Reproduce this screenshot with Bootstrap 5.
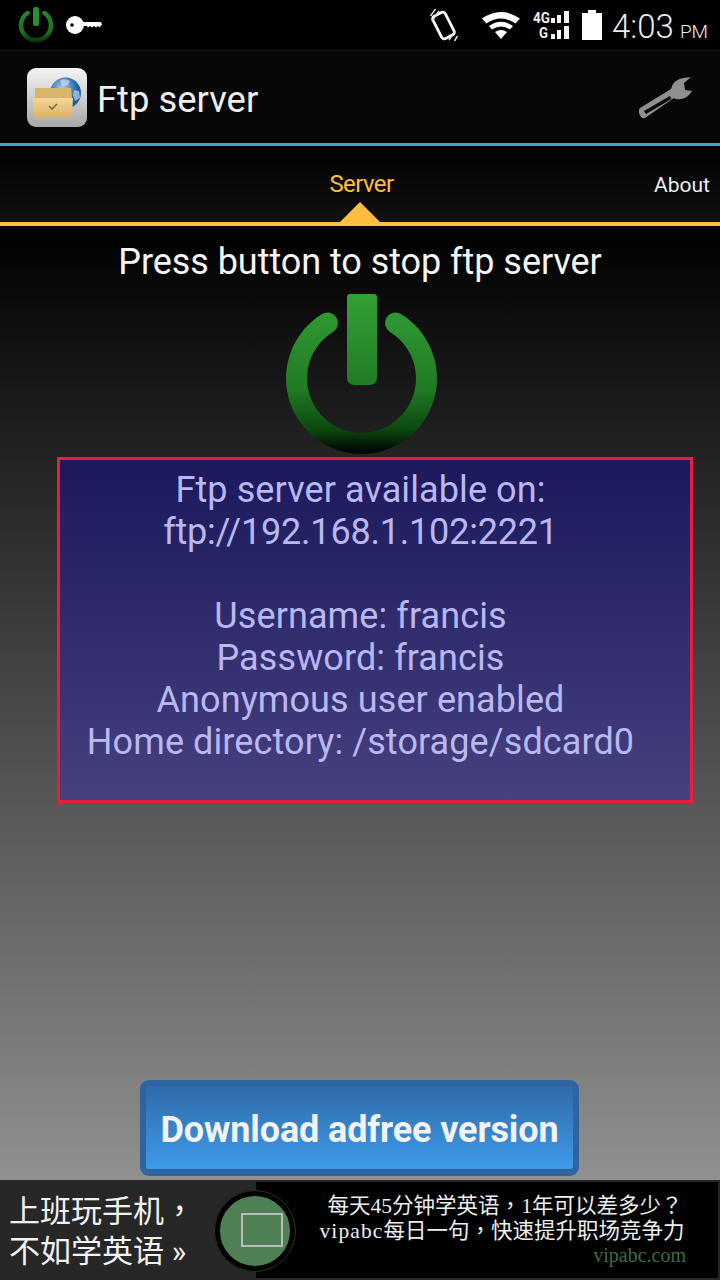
<!doctype html>
<html lang="en"><head><meta charset="utf-8"><title>Ftp server</title>
<link href="https://cdn.jsdelivr.net/npm/bootstrap@5.3.0/dist/css/bootstrap.min.css" rel="stylesheet">
<style>
html,body{margin:0;background:#000}
.phone{width:720px;height:1280px;overflow:hidden;font-family:Roboto,"Noto Sans CJK SC",sans-serif;color:#f2f2f2;background:#000}
.sbar{height:51px;border-bottom:1px solid #161616;background:#000;padding-left:18px;padding-right:12px}
.key{margin-left:12px}
.ic-wifi{margin-left:24px}
.ic-net{margin-left:13px}
.ic-bat{margin-left:12px}
.clock{font-size:33px;line-height:42px;color:#eee;font-weight:300;margin:8px 0 0 10px;width:96px;white-space:nowrap}
.clock small{font-size:19px;font-weight:300;margin-left:-2px}
.abar{height:92px;background:#070707;padding-left:27px;padding-right:27px}
.appic{margin-top:2px}
.atitle{font-size:36.4px;line-height:42px;margin-left:10px;color:#eee;margin-top:6px}
.rule-blue{height:3px;background:#33a9d6}
.tabs{height:76px;background:linear-gradient(#000,#111)}
.tab-on{color:#ffbe41;font-size:24px;line-height:28px;letter-spacing:-.6px;padding:24px 0 0 3px;width:100%;text-align:center}
.tab-off{font-size:21px;line-height:28px;color:#eee;right:10px;top:25px}
.tri{left:340px;bottom:0;border-left:20px solid transparent;border-right:20px solid transparent;border-bottom:20px solid #ffbe41}
.rule-y{height:4px;background:#ffbe41}
.body-area{height:954px;background:linear-gradient(#000,#909090)}
.hint{font-size:36px;line-height:42px;padding-top:15px;color:#f5f5f5;letter-spacing:-.05px}
.power{width:160px;height:164px;margin-top:10px;display:block}
.infobox{width:636px;height:346px;margin:0 0 0 57px;border:3px solid #ee1c3a;background:linear-gradient(#1b195c,#46417f);color:#b9b8f2;font-size:36px;line-height:42px;padding:9px 29px 0 0;letter-spacing:.1px}
.infobox .addr{letter-spacing:-.2px}
.spacer-y{height:277px}
.dlbtn{width:439px;height:96px;margin-left:140px;border:0;border-radius:9px;padding:6px 6px 7px;background:#2f659f;display:block}
.dlin{display:block;height:83px;background:linear-gradient(#2f6ba8,#3f9bea);border-radius:3px;color:#f2f2f2;font-size:36px;font-weight:700;line-height:89px;letter-spacing:-.13px}
.adbar{height:100px;background:#272727}
.adl{width:256px;font-size:31px;padding:7px 0 0 9px;white-space:nowrap}
.adl .ln{display:block;height:43px;line-height:43px}
.adr{left:256px;top:2px;width:462px;height:96px;background:#000;color:#eee;font-family:"Liberation Serif","Noto Sans CJK SC",serif;font-size:21.5px;text-align:center;padding:9px 0 0 36px}
.adr .ln{display:block;height:25px;line-height:25px;white-space:nowrap}
.adr .ln2{padding-right:6px}
.adr .lat{letter-spacing:1.1px}
.punct{font-family:"Noto Sans CJK TC",sans-serif}
.adurl{color:#3f6b41;font-size:20px;line-height:24px;text-align:right;padding:2px 32px 0 0}
.adcirc{left:214px;top:10px;width:82px;height:82px;border-radius:50%;background:#4f8054;border:6px solid #000;outline:1px solid #1d3a1f;outline-offset:-1px;z-index:2}
.adsq{width:42px;height:34px;border:2px solid #bbb;margin:0 0 2px 14px}
</style></head>
<body>
<div class="phone">
 <div class="sbar d-flex align-items-center">
  <svg width="36" height="36" viewBox="0 0 36 36" aria-hidden="true"><defs><linearGradient id="pg1" gradientUnits="userSpaceOnUse" x1="0" y1="0" x2="0" y2="36"><stop offset="0" stop-color="#2a8f2e"/><stop offset=".7" stop-color="#1a701e"/><stop offset="1" stop-color="#032a06"/></linearGradient></defs><path d="M9.500 6A15 15 0 1 0 26.500 6" fill="none" stroke="url(#pg1)" stroke-width="4.500" stroke-linecap="round"/><rect x="15" y="0" width="6" height="19" rx="2.500" fill="#2a8f2e"/></svg>
  <svg class="key" width="36" height="18" viewBox="0 0 36 18" aria-hidden="true"><circle cx="9" cy="9" r="9" fill="#fff"/><circle cx="6" cy="9" r="1.800" fill="#000"/><path d="M15 6h20l1 2.500-2.500 3-1.500-1.500-2 1.500-2-1.500-2 1.500-2-1.500-2 1.500-1-1.500H15z" fill="#fff"/></svg>
  <div class="ms-auto d-flex align-items-center">
   <svg width="28" height="34" viewBox="0 0 28 34" aria-hidden="true"><rect x="6.500" y="5" width="14" height="25" rx="3" transform="rotate(-27 13.500 17.500)" fill="none" stroke="#fff" stroke-width="2.800"/><path d="M.5 8L5.500 1M2 13L9 3M19 32l6-9M24.500 33l3-5" stroke="#ddd" stroke-width="1.500" fill="none"/></svg>
   <svg class="ic-wifi" width="38" height="27" viewBox="0 0 38 27" aria-hidden="true"><path d="M19 27l-6-7q6-4 12 0zM10 17.500l-3-3.500q12-8.500 24 0l-3 3.500q-9-6-18 0zM4.500 11.500L0 6.500q19-13 38 0l-4.500 5q-14.500-10-29 0z" fill="#fff"/></svg>
   <svg class="ic-net" width="37" height="30" viewBox="0 0 37 30" aria-hidden="true"><text x="0" y="13" font-family="Roboto" font-size="14" font-weight="700" fill="#eee" textLength="17" lengthAdjust="spacingAndGlyphs">4G</text><text x="6" y="28" font-family="Roboto" font-size="14" font-weight="700" fill="#eee" textLength="9" lengthAdjust="spacingAndGlyphs">G</text><path d="M18 8h4v5h-4zM24 5h4v8h-4zM31 1h5v12h-5zM18 24h4v5h-4zM24 20h4v9h-4zM31 16h5v13h-5z" fill="#fff"/></svg>
   <svg class="ic-bat" width="20" height="30" viewBox="0 0 20 30" aria-hidden="true"><path d="M0 3h6V0h8v3h6v27H0z" fill="#fff"/></svg>
   <div class="clock">4:03 <small>PM</small></div>
  </div>
 </div>
 <div class="abar d-flex align-items-center">
  <svg class="appic" width="60" height="60" viewBox="0 0 60 60" aria-hidden="true"><defs><linearGradient id="ic" x1="0" y1="0" x2="0" y2="1"><stop offset="0" stop-color="#f4f4f4"/><stop offset="1" stop-color="#a8a8a8"/></linearGradient><linearGradient id="fo" x1="0" y1="0" x2="0" y2="1"><stop offset="0" stop-color="#f3d79a"/><stop offset="1" stop-color="#dcb266"/></linearGradient><radialGradient id="gl" cx=".4" cy=".35"><stop offset="0" stop-color="#a8d0f0"/><stop offset="1" stop-color="#1d5fa8"/></radialGradient></defs><rect width="60" height="59" rx="9" fill="url(#ic)"/><circle cx="38.500" cy="25" r="15.500" fill="url(#gl)"/><path d="M33 12q6-2 10 1l-2 4-6 1zM47 22l5 1 1 7-5 3-2-6z" fill="#dbe8f2" opacity=".6"/><path d="M8 20h36l1 10H8z" fill="#d9b56c"/><path d="M6 30h40l-1 18q0 1-2 1H8q-1 0-1-1z" fill="url(#fo)"/><path d="M22 38l3 3 5-5" fill="none" stroke="#7d6330" stroke-width="1.500"/></svg>
  <div class="atitle">Ftp server</div>
  <svg class="ms-auto" width="56" height="44" viewBox="0 0 56 44" aria-hidden="true"><path d="M3 33L34 14q2-9 12-11l8-1-7 6 1 7 7 1q-4 7-11 8-5 1-7-1L8 43q-2 1-4-1l-2-4q-1-3 1-5z" fill="#8f8f8f"/><path d="M7 36l26-15 1.500 3L9 39z" fill="#070707"/></svg>
 </div>
 <div class="rule-blue"></div>
 <div class="tabs position-relative">
  <div class="tab-on">Server</div>
  <div class="tab-off position-absolute">About</div>
  <div class="tri position-absolute"></div>
 </div>
 <div class="rule-y"></div>
 <div class="body-area">
  <div class="hint text-center">Press button to stop ftp server</div>
  <svg class="power mx-auto" viewBox="0 0 160 164" aria-hidden="true"><defs><linearGradient id="pg2" gradientUnits="userSpaceOnUse" x1="0" y1="0" x2="0" y2="160"><stop offset="0" stop-color="#33a136"/><stop offset=".6" stop-color="#217a24"/><stop offset=".85" stop-color="#0b4a0e"/><stop offset="1" stop-color="#000"/></linearGradient></defs><path d="M47.500 30A65 65 0 1 0 115.500 30" fill="none" stroke="url(#pg2)" stroke-width="21" stroke-linecap="round"/><path d="M70 1h24q3 0 3 3v80q0 8-8 8H75q-8 0-8-8V4q0-3 3-3z" fill="url(#pg2)"/></svg>
  <div class="infobox text-center">
   <div>Ftp server available on:</div>
   <div class="addr">ftp://192.168.1.102:2221</div>
   <div>&nbsp;</div>
   <div>Username: francis</div>
   <div>Password: francis</div>
   <div>Anonymous user enabled</div>
   <div>Home directory: /storage/sdcard0</div>
  </div>
  <div class="spacer-y"></div>
  <button type="button" class="dlbtn text-center"><span class="dlin">Download adfree version</span></button>
 </div>
 <div class="adbar d-flex position-relative">
  <div class="adl"><span class="ln">上班玩手机<span class="punct">，</span></span><span class="ln">不如学英语 »</span></div>
  <div class="adr position-absolute">
   <span class="ln">每天45分钟学英语<span class="punct">，</span>1年可以差多少<span class="punct">？</span></span>
   <span class="ln ln2"><span class="lat">vipabc</span>每日一句<span class="punct">，</span>快速提升职场竞争力</span>
   <div class="adurl">vipabc.com</div>
  </div>
  <div class="adcirc position-absolute d-flex align-items-center justify-content-center"><div class="adsq"></div></div>
 </div>
</div>
<script src="https://cdn.jsdelivr.net/npm/bootstrap@5.3.0/dist/js/bootstrap.bundle.min.js"></script>
</body></html>
